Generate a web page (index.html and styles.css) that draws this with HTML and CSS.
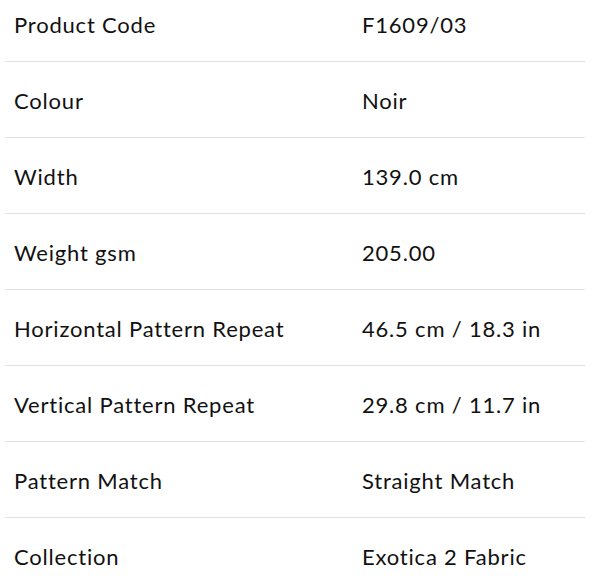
FILE: index.html
```html
<!DOCTYPE html>
<html>
<head>
<meta charset="utf-8">
<link rel="stylesheet" href="styles.css">
</head>
<body>
<div class="specs">
  <div class="row"><div class="label">Product Code</div><div class="value">F1609/03</div></div>
  <div class="row"><div class="label">Colour</div><div class="value">Noir</div></div>
  <div class="row"><div class="label">Width</div><div class="value">139.0 cm</div></div>
  <div class="row"><div class="label">Weight gsm</div><div class="value">205.00</div></div>
  <div class="row"><div class="label">Horizontal Pattern Repeat</div><div class="value">46.5 cm / 18.3 in</div></div>
  <div class="row"><div class="label">Vertical Pattern Repeat</div><div class="value">29.8 cm / 11.7 in</div></div>
  <div class="row"><div class="label">Pattern Match</div><div class="value">Straight Match</div></div>
  <div class="row"><div class="label">Collection</div><div class="value">Exotica 2 Fabric</div></div>
</div>
</body>
</html>
```
FILE: styles.css
```css
html, body {
  margin: 0;
  padding: 0;
  background: #fff;
}
body {
  font-family: Lato, "Liberation Sans", sans-serif;
  font-size: 22px;
  letter-spacing: 0.8px;
  color: #111;
  overflow: hidden;
}
.specs {
  width: 580px;
  margin: -14px 0 0 5px;
}
.row {
  display: grid;
  grid-template-columns: 348px 1fr;
  height: 75px;
  align-items: center;
  border-bottom: 1px solid #e2e2e2;
}
.row:last-child {
  border-bottom: none;
}
.label, .value {
  padding: 2px 9px 0;
}
```
